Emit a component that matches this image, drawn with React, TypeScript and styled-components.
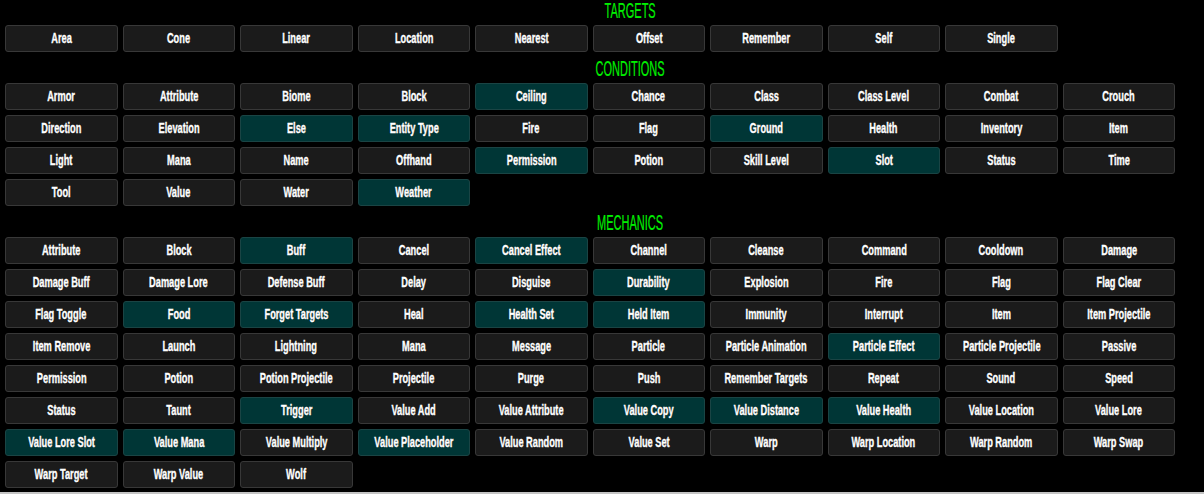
import React from 'react';
import styled, { createGlobalStyle } from 'styled-components';

interface Section {
    readonly title: string;
    readonly items: ReadonlyArray<string>;
    readonly active: ReadonlyArray<string>;
}

const sections: ReadonlyArray<Section> = [
    {
        title: 'TARGETS',
        items: ['Area', 'Cone', 'Linear', 'Location', 'Nearest', 'Offset', 'Remember', 'Self', 'Single'],
        active: []
    },
    {
        title: 'CONDITIONS',
        items: [
            'Armor', 'Attribute', 'Biome', 'Block', 'Ceiling', 'Chance', 'Class', 'Class Level', 'Combat', 'Crouch',
            'Direction', 'Elevation', 'Else', 'Entity Type', 'Fire', 'Flag', 'Ground', 'Health', 'Inventory', 'Item',
            'Light', 'Mana', 'Name', 'Offhand', 'Permission', 'Potion', 'Skill Level', 'Slot', 'Status', 'Time',
            'Tool', 'Value', 'Water', 'Weather'
        ],
        active: ['Ceiling', 'Else', 'Entity Type', 'Ground', 'Permission', 'Slot', 'Weather']
    },
    {
        title: 'MECHANICS',
        items: [
            'Attribute', 'Block', 'Buff', 'Cancel', 'Cancel Effect', 'Channel', 'Cleanse', 'Command', 'Cooldown', 'Damage',
            'Damage Buff', 'Damage Lore', 'Defense Buff', 'Delay', 'Disguise', 'Durability', 'Explosion', 'Fire', 'Flag', 'Flag Clear',
            'Flag Toggle', 'Food', 'Forget Targets', 'Heal', 'Health Set', 'Held Item', 'Immunity', 'Interrupt', 'Item', 'Item Projectile',
            'Item Remove', 'Launch', 'Lightning', 'Mana', 'Message', 'Particle', 'Particle Animation', 'Particle Effect', 'Particle Projectile', 'Passive',
            'Permission', 'Potion', 'Potion Projectile', 'Projectile', 'Purge', 'Push', 'Remember Targets', 'Repeat', 'Sound', 'Speed',
            'Status', 'Taunt', 'Trigger', 'Value Add', 'Value Attribute', 'Value Copy', 'Value Distance', 'Value Health', 'Value Location', 'Value Lore',
            'Value Lore Slot', 'Value Mana', 'Value Multiply', 'Value Placeholder', 'Value Random', 'Value Set', 'Warp', 'Warp Location', 'Warp Random', 'Warp Swap',
            'Warp Target', 'Warp Value', 'Wolf'
        ],
        active: ['Buff', 'Cancel Effect', 'Durability', 'Food', 'Forget Targets', 'Health Set', 'Held Item', 'Particle Effect',
            'Trigger', 'Value Copy', 'Value Distance', 'Value Health', 'Value Lore Slot', 'Value Mana', 'Value Placeholder']
    }
];

const App = () => (
    <>
        <GlobalStyle/>
        <Page>
            {sections.map(section => (
                <SectionBlock key={section.title}>
                    <SectionTitle><TitleText>{section.title}</TitleText></SectionTitle>
                    <ComponentGrid>
                        {section.items.map(item => (
                            <ComponentButton key={item} $active={section.active.includes(item)}>
                                <Label>{item}</Label>
                            </ComponentButton>
                        ))}
                    </ComponentGrid>
                </SectionBlock>
            ))}
        </Page>
        <BottomBar/>
    </>
);

const GlobalStyle = createGlobalStyle`
    body {
        margin: 0;
        background-color: #000;
        font-family: 'Liberation Sans', Arial, sans-serif;
        overflow: hidden;
    }
`;

const Page = styled.div`
    padding: 0 0 4px 5px;
    width: 1170px;
    display: flex;
    flex-direction: column;
    gap: 6px;
`;

const SectionBlock = styled.div`
    display: flex;
    flex-direction: column;
    gap: 5px;
`;

const SectionTitle = styled.div`
    height: 20px;
    padding-left: 80px;
    text-align: center;
    overflow: visible;
`;

const TitleText = styled.span`
    display: inline-block;
    transform: scaleX(0.5);
    color: #00f000;
    font-size: 22px;
    line-height: 24px;
    margin-top: -1px;
    -webkit-text-stroke: 0.2px #00f000;
`;

const ComponentGrid = styled.div`
    display: grid;
    grid-template-columns: repeat(10, minmax(0, 1fr));
    gap: 5px;
`;

const ComponentButton = styled.div<{ $active: boolean }>`
    height: 27px;
    box-sizing: border-box;
    padding-bottom: 1px;
    display: flex;
    align-items: center;
    justify-content: center;
    background-color: ${({ $active }) => $active ? '#003636' : '#1b1b1b'};
    border: 1px solid ${({ $active }) => $active ? '#1a4444' : '#383838'};
    border-radius: 3px;
    color: #fff;
    cursor: pointer;
`;

const Label = styled.span`
    display: inline-block;
    transform: scaleX(0.66);
    font-size: 14px;
    font-weight: bold;
    -webkit-text-stroke: 0.4px #fff;
    text-shadow: 0 0 1px #000;
    white-space: nowrap;
`;

const BottomBar = styled.div`
    height: 2px;
    background-color: #c4c4c4;
`;

export default App;
